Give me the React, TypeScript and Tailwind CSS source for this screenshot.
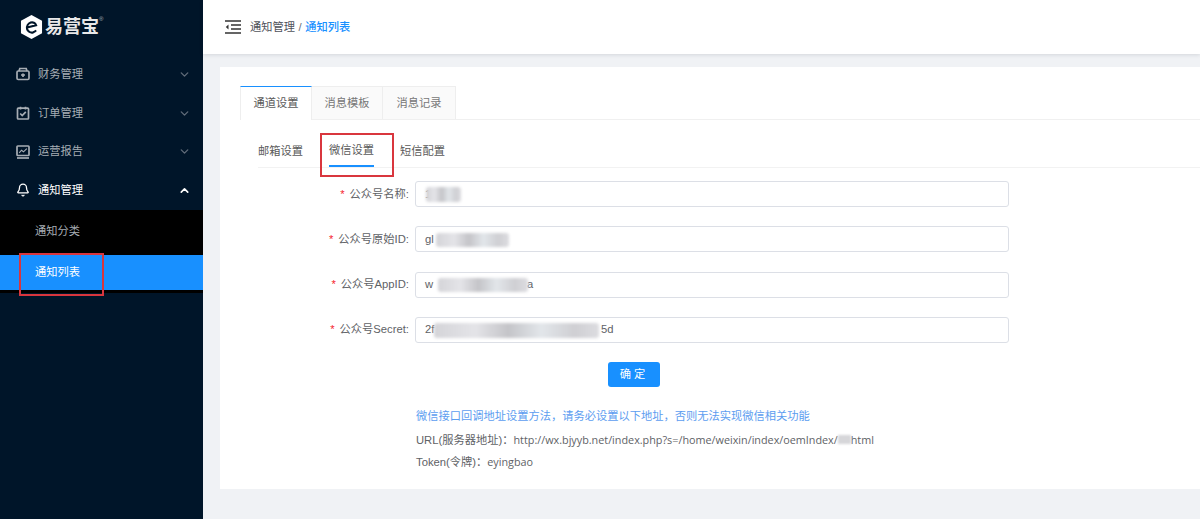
import { Bell, ChevronDown, ChevronUp } from 'lucide-react';
import type { ReactNode } from 'react';

const font = { fontFamily: '"Liberation Sans", "Noto Sans CJK SC", sans-serif' };

function WalletIcon() {
  return (
    <svg viewBox="0 0 14 14" className="w-[14px] h-[14px]" fill="none" stroke="currentColor" strokeWidth="1.7">
      <path d="M3 4 L3.8 1.5 H10.2 L11 4" />
      <rect x="1" y="4" width="12" height="8.5" rx="1.2" />
      <path d="M5 8 H9 M7 6.5 V10" />
    </svg>
  );
}

function OrderIcon() {
  return (
    <svg viewBox="0 0 14 14" className="w-[14px] h-[14px]" fill="none" stroke="currentColor" strokeWidth="1.7">
      <rect x="1.5" y="2.2" width="11" height="10.8" rx="0.8" />
      <path d="M4.5 0.8 V3.5 M9.5 0.8 V3.5" />
      <path d="M4.2 7.5 L6.2 9.5 L9.8 5.8" />
    </svg>
  );
}

function ReportIcon() {
  return (
    <svg viewBox="0 0 14 14" className="w-[14px] h-[14px]" fill="none" stroke="currentColor" strokeWidth="1.7">
      <rect x="1" y="1" width="12" height="9.5" rx="0.8" />
      <path d="M1 13 H13" />
      <path d="M3.2 7.8 L5.5 5.2 L7.5 6.8 L10.8 3.6" strokeWidth="1.1" />
    </svg>
  );
}

function Logo() {
  return (
    <div className="flex items-center h-[54px] pl-[20px] gap-[2px]">
      <svg viewBox="0 0 24 26" className="w-[23px] h-[26px]">
        <path d="M12 0.5 L23 6.5 V19.5 L12 25.5 L1 19.5 V6.5 Z" fill="#fff" />
        <path
          d="M7.4 13.6 L16.8 11.2 C16 8.6 13.4 7.6 11.2 8.4 C8.4 9.4 6.8 12.2 7.4 15 C8 17.8 11 19.4 13.8 18.6 C15 18.2 16 17.6 16.8 16.6"
          fill="none"
          stroke="#001529"
          strokeWidth="2.2"
        />
      </svg>
      <span className="text-[18px] font-bold leading-none text-[#e8e8e8]">易营宝</span>
      <span className="text-[6px] leading-none text-[#b0b6bd] self-start mt-[16px] -ml-[2px]">®</span>
    </div>
  );
}

function MenuItem({ icon, label, open }: { icon: ReactNode; label: string; open?: boolean }) {
  return (
    <div className={`flex items-center h-[38.7px] pl-[16px] pr-[12px] ${open ? 'text-white' : 'text-[#a6adb4]'}`}>
      <span className="w-[14px] flex justify-center">{icon}</span>
      <span className="ml-[8px] text-[11.25px] flex-1">{label}</span>
      {open ? <ChevronUp size={13} strokeWidth={3} /> : <ChevronDown size={13} strokeWidth={2.5} className="text-[#5f6b78]" />}
    </div>
  );
}

function Sidebar() {
  return (
    <aside className="w-[203px] shrink-0 bg-[#001529]">
      <Logo />
      <div className="pt-[1px]">
        <MenuItem icon={<WalletIcon />} label="财务管理" />
        <MenuItem icon={<OrderIcon />} label="订单管理" />
        <MenuItem icon={<ReportIcon />} label="运营报告" />
        <MenuItem icon={<Bell size={16} strokeWidth={2.2} />} label="通知管理" open />
      </div>
      <div className="bg-black h-[83px]">
        <div className="h-[45px] flex items-center pl-[35px] pb-[2px] text-[11.25px] text-[#a6adb4]">通知分类</div>
        <div className="h-[35px] flex items-center pl-[35px] text-[11.25px] text-white bg-[#1890ff]">通知列表</div>
      </div>
    </aside>
  );
}

function Header() {
  return (
    <header className="h-[54px] bg-white shadow-[0_1px_4px_rgba(0,21,41,0.12)] flex items-center pl-[22px] relative text-[11.25px]">
      <svg viewBox="0 0 16 14" className="w-[16px] h-[14px] text-[#333]" fill="none" stroke="currentColor" strokeWidth="1.3">
        <path d="M0 1 H16 M6 5 H16 M6 9 H16 M0 13 H16" />
        <path d="M3.5 4.5 L0.8 7 L3.5 9.5 Z" fill="currentColor" stroke="none" />
      </svg>
      <span className="ml-[9px] text-[#4f535b]">通知管理</span>
      <span className="mx-[3.5px] text-[#6b6f77]">/</span>
      <span className="text-[#1890ff] font-medium">通知列表</span>
    </header>
  );
}

function Blur({ className }: { className: string }) {
  return (
    <span
      className={`absolute rounded-[3px] blur-[1.5px] bg-[linear-gradient(90deg,#d4d4d8_0%,#e4e4e8_25%,#c4c4c8_45%,#e2e6ea_65%,#cfcfd3_85%,#dcdce0_100%)] ${className}`}
    />
  );
}

function Field({ label, value, tail, tailLeft, blur }: { label: string; value: string; tail?: string; tailLeft?: string; blur: string }) {
  return (
    <div className="flex items-center h-[26px]">
      <label className="w-[175px] shrink-0 text-right text-[11.25px] text-[#606266] pr-[6px] whitespace-nowrap">
        <span className="text-[#f5222d] mr-[5px]">*</span>
        {label}:
      </label>
      <div className="relative w-[594px] h-full border border-[#dcdfe6] rounded-[3px] bg-white flex items-center px-[9px] text-[11.25px] text-[#606266]">
        <span>{value}</span>
        {tail && <span className={`absolute ${tailLeft}`}>{tail}</span>}
        <Blur className={blur} />
      </div>
    </div>
  );
}

export default function App() {
  return (
    <div className="w-[1200px] h-[519px] flex overflow-hidden relative bg-[#f0f2f5]" style={font}>
      <Sidebar />
      <main className="flex-1 min-w-0">
        <Header />
        <section className="bg-white ml-[17px] mt-[13px] h-[422px] pl-[20px] pt-[19px]">
          <div className="flex h-[34px] border-b border-[#f0f0f0] text-[11.25px]">
            <div className="w-[72px] h-[34px] flex items-center justify-center text-[#595959] bg-white border-t border-t-[#1890ff] border-x border-x-[#eeeeee]">通道设置</div>
            <div className="w-[71px] flex items-center justify-center text-[#777] bg-[#fafafa] border-t border-r border-[#eeeeee]">消息模板</div>
            <div className="w-[73px] flex items-center justify-center text-[#777] bg-[#fafafa] border-t border-r border-[#eeeeee]">消息记录</div>
          </div>
          <div className="flex h-[48px] border-b border-[#f2f2f2] ml-[18px] text-[11.25px] text-[#595959] whitespace-nowrap">
            <div className="w-[45px] flex items-center pt-[15px]">邮箱设置</div>
            <div className="ml-[26px] w-[45px] flex items-center border-b-2 border-[#1890ff] pt-[15px]">微信设置</div>
            <div className="ml-[26px] w-[45px] flex items-center pt-[15px]">短信配置</div>
          </div>
          <div className="flex flex-col gap-[19.3px] mt-[13px]">
            <Field label="公众号名称" value="1" blur="left-[10px] top-[5px] w-[35px] h-[15px]" />
            <Field label="公众号原始ID" value="gl" blur="left-[20px] top-[6px] w-[73px] h-[14px]" />
            <Field label="公众号AppID" value="w" tail="a" tailLeft="left-[111px]" blur="left-[22px] top-[5px] w-[90px] h-[14px]" />
            <Field label="公众号Secret" value="2f" tail="5d" tailLeft="left-[185px]" blur="left-[18px] top-[5px] w-[165px] h-[15px]" />
          </div>
          <div className="ml-[368px] mt-[19px] w-[52px] h-[25px] bg-[#1890ff] rounded-[3px] text-white text-[11.25px] flex items-center justify-center tracking-[3px]">确定</div>
          <div className="ml-[176px] mt-[21.5px] text-[11.25px] text-[#606266] flex flex-col gap-[5.5px] leading-[17px]">
            <p className="h-[17px] text-[#5c9df0]">微信接口回调地址设置方法，请务必设置以下地址，否则无法实现微信相关功能</p>
            <p className="h-[17px]">URL(服务器地址)：<span className="text-[10.8px] [font-family:'Open_Sans']">http://wx.bjyyb.net/index.php?s=/home/weixin/index/oemIndex/</span><span className="inline-block w-[13px] h-[9px] bg-[#d6d6d9] blur-[1px]" /><span className="text-[10.8px] [font-family:'Open_Sans']">html</span></p>
            <p className="h-[17px]">Token(令牌)：<span className="text-[10.8px] [font-family:'Open_Sans']">eyingbao</span></p>
          </div>
        </section>
      </main>
      {/* red annotation boxes */}
      <div className="absolute left-[19px] top-[253px] w-[85px] h-[43px] border-[2px] border-[#d9363e]" />
      <div className="absolute left-[320px] top-[133px] w-[74px] h-[44px] border-[2px] border-[#d9363e]" />
    </div>
  );
}
